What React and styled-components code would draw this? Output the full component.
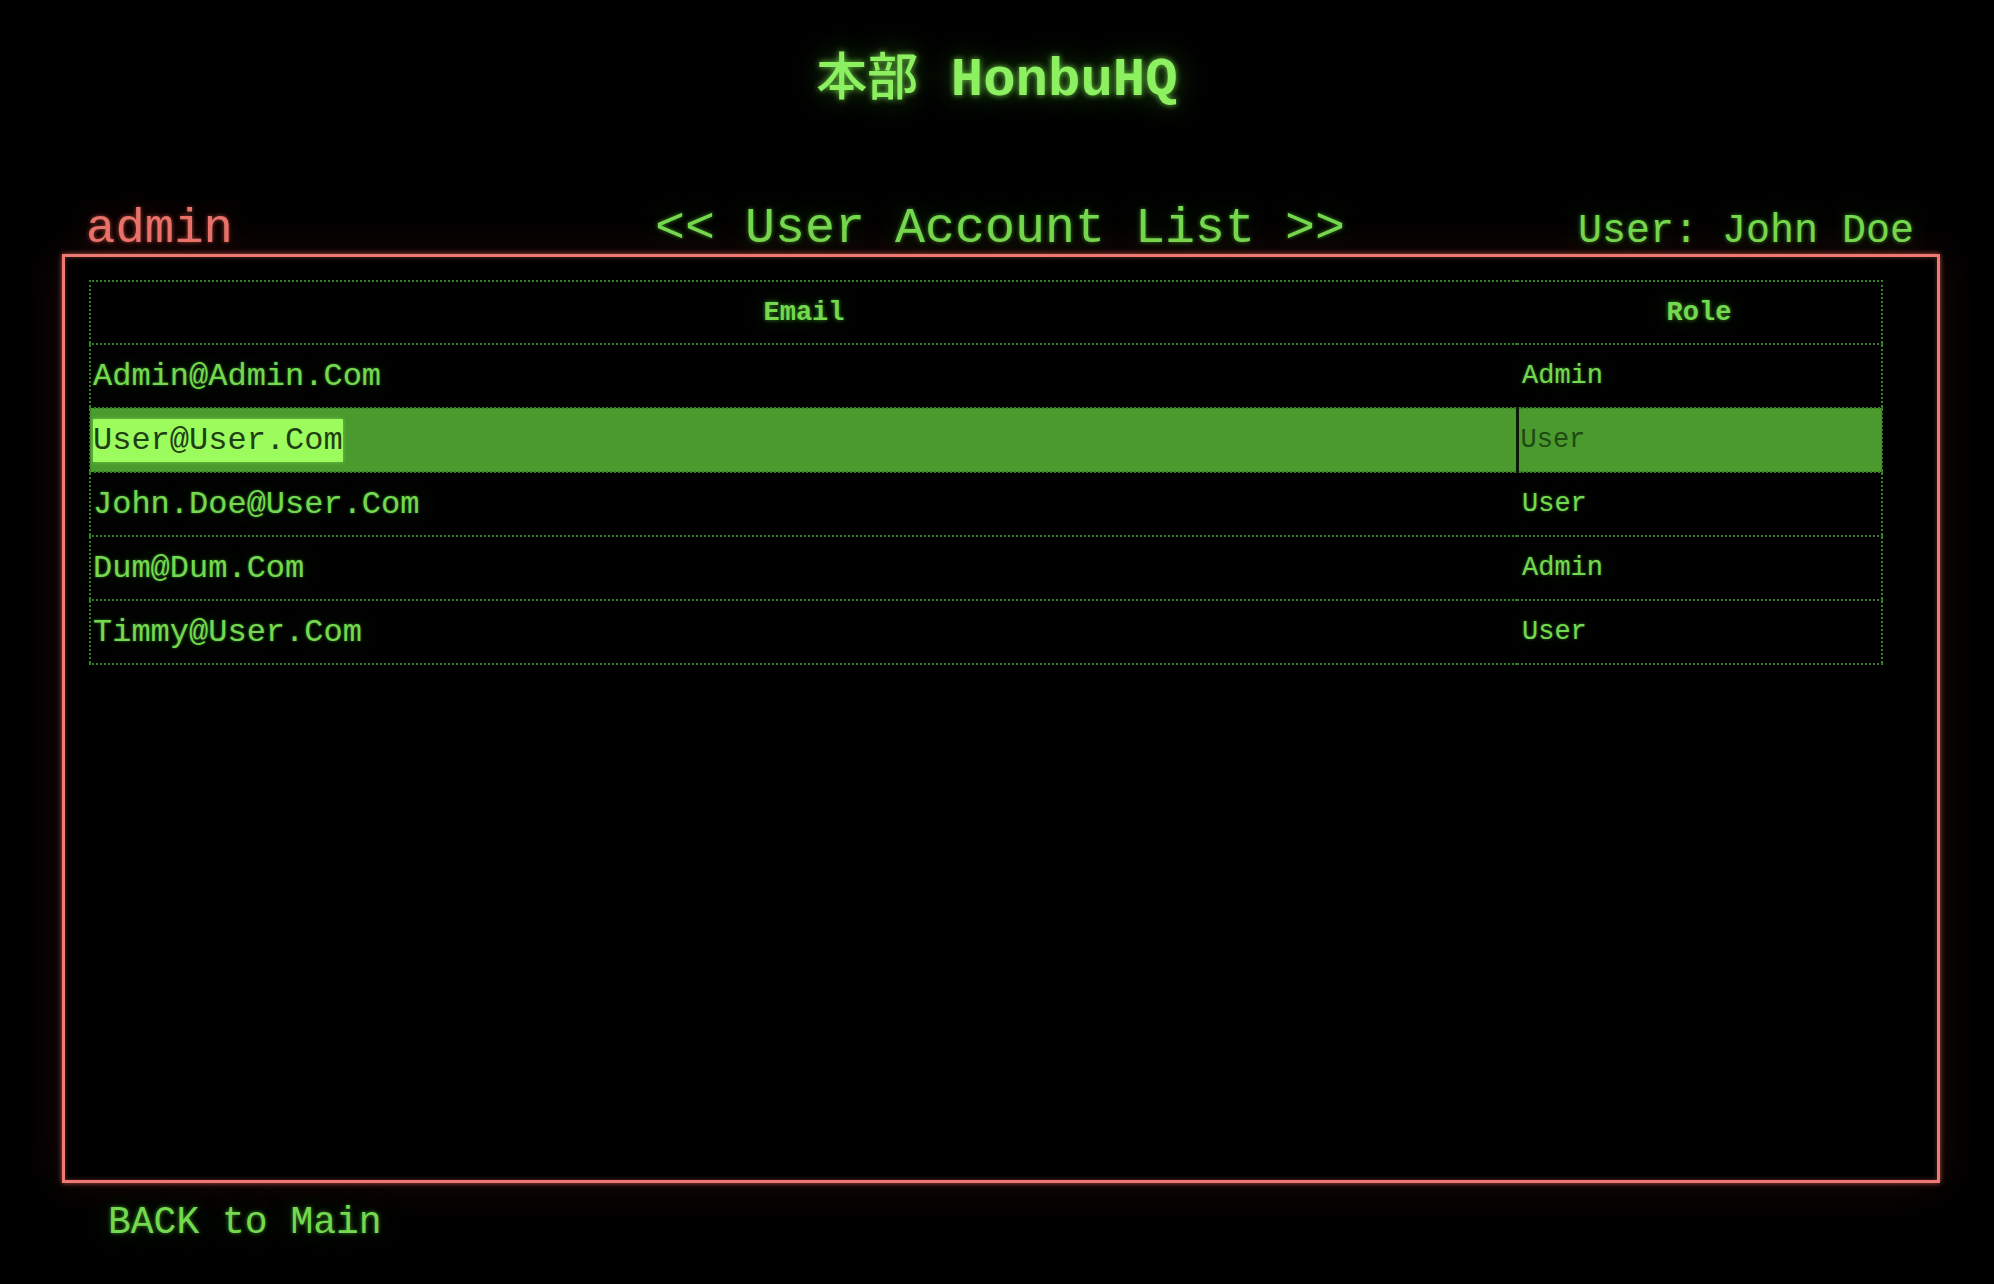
import React from "react";
import styled, { createGlobalStyle } from "styled-components";

const Global = createGlobalStyle`
  html, body {
    margin: 0;
    padding: 0;
    background: #000;
  }
  body {
    font-family: "Liberation Mono", "Courier New", monospace;
    color: #74d94e;
  }
`;

const Page = styled.div`
  width: 1994px;
  min-height: 1284px;
  background: #000;
  display: flex;
  flex-direction: column;
`;

const Title = styled.h1`
  margin: 42px 0 0;
  text-align: center;
  font-family: "Liberation Mono", "Noto Sans CJK JP", monospace;
  font-size: 54px;
  line-height: 62px;
  font-weight: 700;
  color: #8df060;
  text-shadow: 0 0 6px rgba(140, 255, 90, 0.75), 0 0 30px rgba(90, 220, 60, 0.4);
`;

const Cjk = styled.span`
  font-family: "Noto Sans CJK JP", sans-serif;
  font-weight: 500;
  font-size: 51px;
`;

const Main = styled.div`
  margin: 92px 0 0 62px;
  width: 1878px;
  display: flex;
  flex-direction: column;
`;

const HeadRow = styled.div`
  display: flex;
  align-items: baseline;
  justify-content: space-between;
  padding: 0 26px 0 24px;
  line-height: 1;
`;

const Who = styled.div`
  font-size: 49px;
  color: #e8736b;
  text-shadow: 0 0 4px rgba(255, 110, 100, 0.6), 0 0 30px rgba(255, 80, 70, 0.25);
  width: 560px;
`;

const PageTitle = styled.div`
  font-size: 50px;
  color: #74d94e;
  text-shadow: 0 0 4px rgba(120, 255, 80, 0.5), 0 0 30px rgba(90, 220, 60, 0.25);
`;

const Current = styled.div`
  font-size: 40px;
  color: #74d94e;
  width: 560px;
  text-align: right;
  text-shadow: 0 0 4px rgba(120, 255, 80, 0.5), 0 0 30px rgba(90, 220, 60, 0.25);
`;

const Frame = styled.div`
  box-sizing: border-box;
  height: 929px;
  border: 3px solid #ec7a72;
  box-shadow: 0 0 5px rgba(255, 110, 100, 0.7), 0 0 40px rgba(255, 80, 70, 0.12),
    inset 0 0 4px rgba(255, 110, 100, 0.4);
  padding: 23px 54px 0 24px;
`;

const Table = styled.table`
  width: 100%;
  border-collapse: collapse;
  border: 2px dotted #347f25;
`;

const Th = styled.th`
  height: 61px;
  padding: 0;
  font-size: 27px;
  font-weight: 700;
  color: #74d94e;
  text-align: center;
  border-bottom: 2px dotted #347f25;
  text-shadow: 0 0 4px rgba(120, 255, 80, 0.5), 0 0 24px rgba(90, 220, 60, 0.25);
  width: ${(p) => p.$w || "auto"};
`;

const Tr = styled.tr`
  background: ${(p) => (p.$selected ? "#4a9a2e" : "transparent")};
`;

const EmailCell = styled.td`
  height: 62px;
  padding: 0 0 0 2px;
  font-size: 32px;
  color: ${(p) => (p.$selected ? "#1f3f12" : "#74d94e")};
  border-bottom: 2px dotted #347f25;
  text-shadow: ${(p) =>
    p.$selected ? "none" : "0 0 3px rgba(120,255,80,0.45), 0 0 24px rgba(90,220,60,0.22)"};
`;

const RoleCell = styled.td`
  height: 62px;
  padding: 0 0 0 ${(p) => (p.$selected ? "2px" : "5px")};
  font-size: 27px;
  color: ${(p) => (p.$selected ? "#1f4a14" : "#74d94e")};
  border-bottom: 2px dotted #347f25;
  border-left: ${(p) => (p.$selected ? "3px solid #0a1a06" : "none")};
  text-shadow: ${(p) =>
    p.$selected ? "none" : "0 0 3px rgba(120,255,80,0.45), 0 0 24px rgba(90,220,60,0.22)"};
`;

const Picked = styled.span`
  background: #9cfc5e;
  padding: 3px 0;
  box-shadow: 0 0 4px rgba(160, 255, 100, 0.5);
`;

const Back = styled.div`
  margin: 17px 0 0 46px;
  font-size: 38px;
  line-height: 1.2;
  color: #74d94e;
  text-shadow: 0 0 4px rgba(120, 255, 80, 0.5), 0 0 30px rgba(90, 220, 60, 0.25);
`;

const users = [
  { email: "Admin@Admin.Com", role: "Admin" },
  { email: "User@User.Com", role: "User", selected: true },
  { email: "John.Doe@User.Com", role: "User" },
  { email: "Dum@Dum.Com", role: "Admin" },
  { email: "Timmy@User.Com", role: "User" },
];

export default function App() {
  return (
    <Page>
      <Global />
      <Title>
        <Cjk>本部</Cjk> HonbuHQ
      </Title>
      <Main>
        <HeadRow>
          <Who>admin</Who>
          <PageTitle>&lt;&lt; User Account List &gt;&gt;</PageTitle>
          <Current>User: John Doe</Current>
        </HeadRow>
        <Frame>
          <Table>
            <thead>
              <tr>
                <Th>Email</Th>
                <Th $w="364px">Role</Th>
              </tr>
            </thead>
            <tbody>
              {users.map((u) => (
                <Tr key={u.email} $selected={u.selected}>
                  <EmailCell $selected={u.selected}>
                    {u.selected ? <Picked>{u.email}</Picked> : u.email}
                  </EmailCell>
                  <RoleCell $selected={u.selected}>{u.role}</RoleCell>
                </Tr>
              ))}
            </tbody>
          </Table>
        </Frame>
        <Back>BACK to Main</Back>
      </Main>
    </Page>
  );
}
